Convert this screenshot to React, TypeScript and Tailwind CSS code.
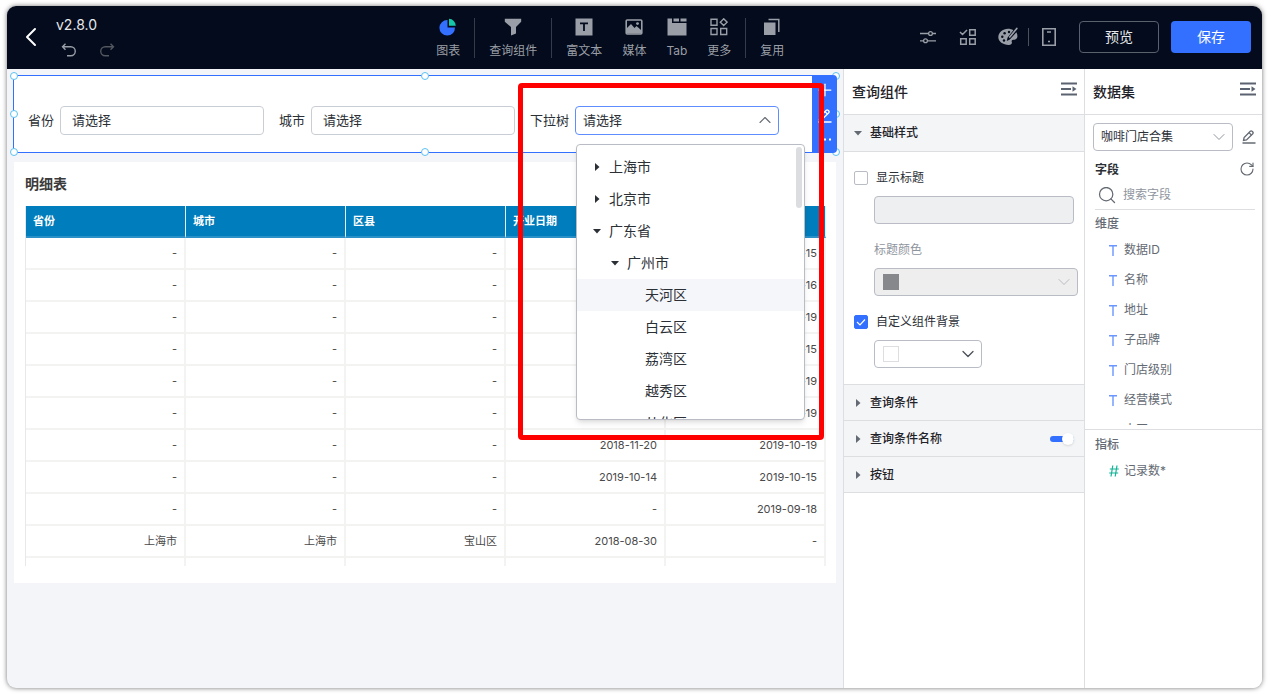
import { ChevronDown, ChevronLeft, ChevronUp, Plus, RotateCw, Search } from "lucide-react";
import type { ReactNode } from "react";

const treeRows = [
  { name: "上海市", level: 0, state: "closed" },
  { name: "北京市", level: 0, state: "closed" },
  { name: "广东省", level: 0, state: "open" },
  { name: "广州市", level: 1, state: "open" },
  { name: "天河区", level: 2, state: "leaf", active: true },
  { name: "白云区", level: 2, state: "leaf" },
  { name: "荔湾区", level: 2, state: "leaf" },
  { name: "越秀区", level: 2, state: "leaf" },
  { name: "从化区", level: 2, state: "leaf" },
];

const indents = ["pl-[14px]", "pl-8", "pl-[50px]"];

const columns = ["省份", "城市", "区县", "开业日期", ""];

const tableRows = [
  ["-", "-", "-", "", "2019-10-15"],
  ["-", "-", "-", "", "2019-10-16"],
  ["-", "-", "-", "", "2019-10-19"],
  ["-", "-", "-", "", "2019-10-15"],
  ["-", "-", "-", "", "2019-10-19"],
  ["-", "-", "-", "", "2019-10-19"],
  ["-", "-", "-", "2018-11-20", "2019-10-19"],
  ["-", "-", "-", "2019-10-14", "2019-10-15"],
  ["-", "-", "-", "-", "2019-09-18"],
  ["上海市", "上海市", "宝山区", "2018-08-30", "-"],
  ["", "", "", "", ""],
];

const dimensions = ["数据ID", "名称", "地址", "子品牌", "门店级别", "经营模式", "大区"];

const handles = [
  "-left-1 -top-1",
  "left-1/2 -top-1 -translate-x-1/2",
  "-right-1 -top-1",
  "-left-1 top-1/2 -translate-y-1/2",
  "-right-1 top-1/2 -translate-y-1/2",
  "-left-1 -bottom-1",
  "left-1/2 -bottom-1 -translate-x-1/2",
  "-right-1 -bottom-1",
];

function Triangle({ open, className }: { open?: boolean; className?: string }) {
  return (
    <svg width="8" height="8" viewBox="0 0 8 8" fill="currentColor" className={className}>
      {open ? <path d="M0 2h8L4 6.500z" /> : <path d="M2 0v8l4.500-4z" />}
    </svg>
  );
}

function PencilLine({ className }: { className?: string }) {
  return (
    <svg width="14" height="14" viewBox="0 0 14 14" fill="none" stroke="currentColor" strokeWidth="1.300" className={className}>
      <path d="M1.500 10.500l.6-3L8.300 1.200a1.200 1.200 0 0 1 1.700 0l.8.8a1.200 1.200 0 0 1 0 1.700L4.500 10z" />
      <path d="M7 2.600l2.400 2.400" />
      <path d="M.5 13h13" strokeWidth="1.500" />
    </svg>
  );
}

function CollapseIcon() {
  return (
    <svg width="16" height="16" viewBox="0 0 16 16" fill="#5c6370">
      <path d="M0 1.500h16v2H0zM0 7h10v2H0zM0 12.500h16v2H0zM11.500 5.200L15.500 8l-4 2.800z" />
    </svg>
  );
}

function Tool({ label, children }: { label: string; children: ReactNode }) {
  return (
    <button type="button" className="flex flex-col items-center gap-1.5 text-[#9a9ea6]">
      {children}
      <span className="text-xs leading-[18px] whitespace-nowrap">{label}</span>
    </button>
  );
}

function ToolDivider() {
  return <span className="w-px h-10 bg-[#343b49]" />;
}

function Header() {
  return (
    <header className="h-[63px] shrink-0 flex pb-0.5 bg-[#030b1c] text-[#9a9ea6]">
      <div className="w-1/3 flex items-center pl-2">
        <button type="button" aria-label="返回" className="text-white">
          <ChevronLeft size={32} strokeWidth={1.5} />
        </button>
        <div className="pl-[9px] pb-0.5">
          <p className="text-sm leading-5 text-[#e6e8eb]">v2.8.0</p>
          <div className="flex gap-[22px] pl-[5px] pt-2">
            <button type="button" aria-label="撤销">
              <svg width="16" height="14" viewBox="0 0 16 14" fill="none" stroke="currentColor" strokeWidth="1.400">
                <path d="M4.500 .8L1.500 3.800l3 3M1.500 3.800h8.300a4.400 4.400 0 0 1 0 8.900H6" />
              </svg>
            </button>
            <button type="button" aria-label="重做" className="text-[#53575f]">
              <svg width="16" height="14" viewBox="0 0 16 14" fill="none" stroke="currentColor" strokeWidth="1.400">
                <path d="M11.500 .8l3 3-3 3M14.500 3.800H6.200a4.400 4.400 0 0 0 0 8.900H10" />
              </svg>
            </button>
          </div>
        </div>
      </div>

      <nav className="flex items-start gap-[14px] pt-3 px-[11px]">
        <Tool label="图表">
          <svg width="18" height="18" viewBox="0 0 18 18">
            <path d="M8.500 2v7.500H16A7.800 7.800 0 1 1 8.500 2z" fill="#3370ff" />
            <path d="M10 .8a7.200 7.200 0 0 1 6.800 7H10z" fill="#14c8a8" />
          </svg>
        </Tool>
        <ToolDivider />
        <Tool label="查询组件">
          <svg width="18" height="18" viewBox="0 0 18 18" fill="currentColor">
            <path d="M.8.800h16.400v3L12 9v6.500L7 17.500V9L.8 3.800z" />
          </svg>
        </Tool>
        <ToolDivider />
        <div className="flex gap-5">
          <Tool label="富文本">
            <svg width="18" height="18" viewBox="0 0 18 18">
              <path d="M.5.500h17v17H.5z" fill="currentColor" />
              <path d="M5 5.300h8M9 5.300V13" stroke="#030b1c" strokeWidth="1.800" />
            </svg>
          </Tool>
          <Tool label="媒体">
            <svg width="18" height="18" viewBox="0 0 18 18" fill="none" stroke="currentColor" strokeWidth="1.600">
              <rect x="1.200" y="2" width="15.600" height="14" rx="1" />
              <path d="M2 13.500V10l4-4 3.500 4 2-2L16 12v3.500H2z" fill="currentColor" stroke="none" />
              <circle cx="12.500" cy="5.600" r="1.400" fill="currentColor" stroke="none" />
            </svg>
          </Tool>
          <Tool label="Tab">
            <svg width="20" height="18" viewBox="0 0 20 18" fill="currentColor">
              <path d="M.5.500h4.500v4.500h14.500v12.500H.5zM6.500.500h5.500v3H6.500zM13.500.500h6v3h-6z" />
            </svg>
          </Tool>
          <Tool label="更多">
            <svg width="18" height="18" viewBox="0 0 18 18" fill="none" stroke="currentColor" strokeWidth="1.400">
              <path d="M1 1.200h6v6H1zM1 10.500h6v6H1zM10.700 10.500h6v6h-6zM13.700.800l3.400 3.400-3.400 3.400-3.400-3.400z" />
            </svg>
          </Tool>
        </div>
        <ToolDivider />
        <Tool label="复用">
          <svg width="18" height="18" viewBox="0 0 18 18">
            <path d="M1 4.500h11.500V17H1z" fill="currentColor" />
            <path d="M5.500 1.500h10.300V14" fill="none" stroke="currentColor" strokeWidth="1.500" />
          </svg>
        </Tool>
      </nav>

      <div className="ml-auto flex items-center pr-[11px]">
        <div className="flex items-center gap-5">
          <button type="button" aria-label="筛选">
            <svg width="20" height="20" viewBox="0 0 20 20" fill="none" stroke="currentColor" strokeWidth="1.300">
              <path d="M2 6.500h8.500M14.500 6.500H18M2 13.800h3.500M9.500 13.800H18" />
              <circle cx="12.500" cy="6.500" r="1.900" />
              <circle cx="7.500" cy="13.800" r="1.900" />
            </svg>
          </button>
          <button type="button" aria-label="批量选择">
            <svg width="20" height="20" viewBox="0 0 20 20" fill="none" stroke="currentColor" strokeWidth="1.500">
              <path d="M2 5l2.500 2.500L9 3M11.700 2.700h5.500v5.500h-5.500zM2.700 11.700h5.500v5.500H2.700zM11.700 11.700h5.500v5.500h-5.500z" />
            </svg>
          </button>
          <button type="button" aria-label="主题">
            <svg width="20" height="20" viewBox="0 0 20 20">
              <path d="M10 1.800c2 0 3.800.5 5.300 1.500L9.500 10.800l-.7 3.200 3-1.400 6.600-7.400c2 4 .9 7.500-1.900 7.500-2.200 0-3.400.5-2.700 2.300.6 1.700-.8 3-3.100 2.900C5 17.800.3 14.800.3 10.300S4.600 1.800 10 1.800z" fill="currentColor" />
              <path d="M18.800 1.500l-7 8.500" stroke="currentColor" strokeWidth="1.700" strokeLinecap="round" />
              <g fill="#030b1c">
                <circle cx="4.300" cy="9.800" r="1.200" />
                <circle cx="6.600" cy="6.200" r="1.200" />
                <circle cx="11" cy="5" r="1.200" />
                <circle cx="6" cy="13.500" r="1.200" />
              </g>
            </svg>
          </button>
        </div>
        <span className="w-px h-[18px] mx-2.5 bg-[#4b515d]" />
        <button type="button" aria-label="移动端">
          <svg width="20" height="20" viewBox="0 0 20 20" fill="none" stroke="currentColor" strokeWidth="1.600">
            <path d="M3.800 1.800h12.400v16.400H3.800z" />
            <path d="M8 5h4M9 14.500h2" />
          </svg>
        </button>
        <div className="flex gap-3 pl-5 text-sm">
          <button type="button" className="w-20 h-8 rounded border border-[#5a606c] text-[#e6e8eb]">
            预览
          </button>
          <button type="button" className="w-20 h-8 rounded bg-[#3370ff] text-white">
            保存
          </button>
        </div>
      </div>
    </header>
  );
}

function QueryField({ id, label }: { id: string; label: string }) {
  return (
    <div className="flex items-center gap-1.5">
      <label htmlFor={id} className="whitespace-nowrap">
        {label}
      </label>
      <select
        id={id}
        className="appearance-none w-[204px] h-[29px] pl-[11px] rounded border border-[#c9cdd4] bg-white"
      >
        <option>请选择</option>
      </select>
    </div>
  );
}

function RegionTree() {
  return (
    <div className="absolute left-px top-[38px] z-20 w-[229px] h-[276px] overflow-hidden rounded border border-[#b9bcc4] bg-white pt-1.5 shadow-md text-sm">
      <ul role="tree" aria-label="下拉树">
        {treeRows.map((row) => (
          <li
            key={row.name}
            role="treeitem"
            aria-selected={!!row.active}
            className={`flex items-center gap-1.5 h-8 ${indents[row.level]} ${row.active ? "bg-[#f5f6fa]" : ""}`}
          >
            {row.state === "leaf" ? (
              <span className="w-3" />
            ) : (
              <span className="w-3 flex justify-center">
                <Triangle open={row.state === "open"} />
              </span>
            )}
            {row.name}
          </li>
        ))}
      </ul>
      <span className="absolute right-0.5 top-0.5 w-1.5 h-[61px] rounded-full bg-[#dcdde0]" />
    </div>
  );
}

function QueryComponent() {
  return (
    <section className="relative flex gap-[15px] border border-[#3370ff] bg-white pl-[14px] pt-[30px] pb-[17px] text-[13px] text-[#2b2f36]">
      <QueryField id="province" label="省份" />
      <QueryField id="city" label="城市" />
      <div className="flex items-center gap-1.5">
        <label htmlFor="region" className="whitespace-nowrap">
          下拉树
        </label>
        <div className="relative">
          <select
            id="region"
            className="block appearance-none w-[204px] h-[29px] pl-[7px] rounded border border-[#5e8dff] bg-white"
          >
            <option>请选择</option>
          </select>
          <ChevronUp size={20} strokeWidth={1.3} className="absolute right-1 top-1 text-[#646a73] pointer-events-none" />
          <RegionTree />
        </div>
      </div>

      {handles.map((place) => (
        <span key={place} className={`absolute w-2 h-2 rounded-full border border-[#5ac1f2] bg-white ${place}`} />
      ))}

      <div className="absolute -right-px -top-px -bottom-px w-[25px] flex flex-col items-center justify-around rounded-r bg-[#3370ff] pb-0.5 text-white">
        <button type="button" aria-label="添加">
          <Plus size={20} strokeWidth={1.5} />
        </button>
        <button type="button" aria-label="编辑">
          <PencilLine />
        </button>
        <button type="button" aria-label="更多操作">
          <svg width="14" height="14" viewBox="0 0 14 14" fill="currentColor">
            <path d="M1 6.500h2v2H1zM6 6.500h2v2H6zM11 6.500h2v2h-2z" />
          </svg>
        </button>
      </div>
    </section>
  );
}

function DetailTable() {
  return (
    <section className="mt-[9px] ml-px mr-px bg-white pl-[11px] pr-2.5 pt-[11px] pb-[17px]">
      <h2 className="text-sm leading-[22px] font-bold text-[#3b3b3b]">明细表</h2>
      <div className="mt-[11px] h-[360px] overflow-hidden border-l border-[#e8e8e8]">
        <table className="w-full table-fixed border-separate border-spacing-0 text-[11px]">
          <thead>
            <tr>
              {columns.map((name, i) => (
                <th
                  key={i}
                  className="h-8 px-[7px] text-left font-bold text-white bg-[#007dbc] border-r border-r-[#e6eef3] border-b-2 border-b-[#2b90c8]"
                >
                  {name}
                </th>
              ))}
            </tr>
          </thead>
          <tbody className="text-right text-[#4a4a4a]">
            {tableRows.map((cells, i) => (
              <tr key={i}>
                {cells.map((cell, j) => (
                  <td key={j} className="h-8 pr-[7px] border-r-2 border-b-2 border-[#f3f3f2]">
                    {cell}
                  </td>
                ))}
              </tr>
            ))}
          </tbody>
        </table>
      </div>
    </section>
  );
}

function SectionHeader({ title, open, children }: { title: string; open?: boolean; children?: ReactNode }) {
  return (
    <div
      className={`flex items-center pl-2.5 pr-2.5 bg-[#f4f5f7] border-b border-[#dcdee2] ${open ? "h-[37px]" : "h-9"}`}
    >
      <button type="button" aria-expanded={!!open} className="flex items-center gap-2 font-medium text-[#1f2329]">
        <Triangle open={open} className="text-[#646a73]" />
        {title}
      </button>
      {children}
    </div>
  );
}

function PropertyPanel() {
  return (
    <aside className="w-[241px] shrink-0 border-l border-[#dcdee2] bg-white text-xs text-[#2b2f36]">
      <div className="flex items-start justify-between h-[46px] pt-3 pl-2 pr-[7px] border-b border-[#dcdee2]">
        <h2 className="text-sm leading-[22px] font-medium text-[#1f2329]">查询组件</h2>
        <button type="button" aria-label="收起">
          <CollapseIcon />
        </button>
      </div>
      <SectionHeader title="基础样式" open />

      <div className="pl-2.5 pt-[18px] pb-4 border-b border-[#dcdee2]">
        <label className="flex items-center gap-2 h-4">
          <input type="checkbox" className="appearance-none w-3.5 h-3.5 rounded-xs border border-[#b9bcc4] bg-white" />
          显示标题
        </label>
        <div className="pl-5 pt-2.5">
          <input
            type="text"
            aria-label="标题"
            disabled
            className="block w-[200px] h-7 rounded border border-[#b9bcc4] bg-[#eeeff1]"
          />
          <label htmlFor="title-color" className="block pt-4 pb-2 leading-5 text-[#8f959e]">
            标题颜色
          </label>
          <div className="relative w-[204px]">
            <select
              id="title-color"
              disabled
              className="block appearance-none w-full h-7 rounded border border-[#b9bcc4] bg-[#eeeeee]"
            />
            <span className="absolute left-[9px] top-1.5 w-4 h-4 bg-[#87888c]" />
            <ChevronDown size={20} strokeWidth={1.2} className="absolute right-1 top-1 text-[#b9bcc4]" />
          </div>
        </div>
        <label className="flex items-center gap-2 h-4 mt-[18px]">
          <span className="grid">
            <input
              type="checkbox"
              defaultChecked
              className="col-start-1 row-start-1 appearance-none w-3.5 h-3.5 rounded-xs border border-[#b9bcc4] checked:border-[#3370ff] checked:bg-[#3370ff]"
            />
            <svg
              width="14"
              height="14"
              viewBox="0 0 14 14"
              fill="none"
              stroke="#fff"
              strokeWidth="1.200"
              className="col-start-1 row-start-1 pointer-events-none"
            >
              <path d="M3 7l3 3 5-5.500" />
            </svg>
          </span>
          自定义组件背景
        </label>
        <div className="pl-5 pt-2.5">
          <div className="relative w-[108px]">
            <select
              aria-label="背景颜色"
              className="block appearance-none w-full h-7 rounded border border-[#b9bcc4] bg-white"
            />
            <span className="absolute left-[9px] top-1.5 w-4 h-4 border border-[#dcdee2] bg-white pointer-events-none" />
            <ChevronDown size={20} strokeWidth={1.5} className="absolute right-1 top-1 text-[#4a4f57] pointer-events-none" />
          </div>
        </div>
      </div>

      <SectionHeader title="查询条件" />
      <SectionHeader title="查询条件名称">
        <label className="ml-auto flex items-center">
          <span className="sr-only">查询条件名称</span>
          <input
            type="checkbox"
            role="switch"
            defaultChecked
            className="relative appearance-none w-6 h-1.5 rounded-full bg-[#3370ff] before:absolute before:right-0 before:-top-[3px] before:w-3 before:h-3 before:rounded-full before:bg-white before:shadow-sm"
          />
        </label>
      </SectionHeader>
      <SectionHeader title="按钮" />
    </aside>
  );
}

function DatasetPanel() {
  return (
    <aside className="w-[178px] shrink-0 border-l border-[#dcdee2] bg-white text-xs text-[#646a73]">
      <div className="flex items-start justify-between h-[46px] pt-3 pl-2 pr-1.5 border-b border-[#dcdee2]">
        <h2 className="text-sm leading-[22px] font-medium text-[#1f2329]">数据集</h2>
        <button type="button" aria-label="收起">
          <CollapseIcon />
        </button>
      </div>

      <div className="flex items-center justify-between pl-2 pr-1.5 pt-2">
        <div className="relative">
          <select
            aria-label="数据集"
            className="block appearance-none w-[140px] h-7 pl-[7px] rounded border border-[#b9bcc4] bg-white text-[#2b2f36]"
          >
            <option>咖啡门店合集</option>
          </select>
          <ChevronDown size={20} strokeWidth={1.2} className="absolute right-1 top-1 text-[#8f959e] pointer-events-none" />
        </div>
        <button type="button" aria-label="编辑数据集">
          <PencilLine />
        </button>
      </div>

      <div className="pl-2.5 pr-[7px]">
        <div className="flex items-center justify-between pt-2 h-[30px]">
          <h3 className="font-bold text-[#2b2f36]">字段</h3>
          <button type="button" aria-label="刷新" className="pb-0.5">
            <RotateCw size={16} strokeWidth={1.7} />
          </button>
        </div>
        <label className="flex items-center gap-1.5 h-[29px] pl-0.5 border-b border-[#dcdee2]">
          <Search size={20} strokeWidth={1.5} className="shrink-0" />
          <input
            type="text"
            aria-label="搜索字段"
            placeholder="搜索字段"
            className="min-w-0 flex-1 outline-none placeholder:text-[#8f959e]"
          />
        </label>
        <h3 className="pt-1 leading-5 font-medium">维度</h3>
      </div>
      <ul className="h-[190px] mt-px mb-1 pl-6 overflow-hidden">
        {dimensions.map((name) => (
          <li key={name} className="flex items-center gap-1.5 h-[30px]">
            <svg width="9" height="11" viewBox="0 0 9 11" stroke="#6b96ff" strokeWidth="1.400">
              <path d="M0 .8h8M4 .8V11" />
            </svg>
            {name}
          </li>
        ))}
      </ul>
      <div className="border-t border-[#dcdee2]">
        <h3 className="pt-[5px] leading-5 pl-2.5 font-medium">指标</h3>
        <ul className="pl-6">
          <li className="flex items-center gap-[5px] h-8">
            <svg width="10" height="12" viewBox="0 0 10 12" stroke="#12b397" strokeWidth="1.200">
              <path d="M3.800 .5L2 11.500M8 .5L6.200 11.500M.8 4h9M.2 8h9" />
            </svg>
            记录数*
          </li>
        </ul>
      </div>
    </aside>
  );
}

export default function App() {
  return (
    <div className="min-h-screen flex bg-white pt-1.5 pb-1.5 pl-[7px] pr-1.5 font-[Inter,'Noto_Sans_CJK_SC',sans-serif]">
      <div className="flex-1 flex flex-col min-w-0 overflow-hidden rounded-[9px] bg-[#f4f5f8] shadow-[0_0_5px_rgba(0,0,0,0.55)]">
        <Header />
        <div className="flex-1 flex">
          <main className="relative flex-1 min-w-0 px-1.5 pt-1.5">
            <QueryComponent />
            <DetailTable />
            {/* highlight frame around the tree select */}
            <div className="absolute left-[511px] top-[14px] z-30 w-[306px] h-[357px] rounded-sm border-[5px] border-[#ff0000] pointer-events-none" />
          </main>
          <PropertyPanel />
          <DatasetPanel />
        </div>
      </div>
    </div>
  );
}
